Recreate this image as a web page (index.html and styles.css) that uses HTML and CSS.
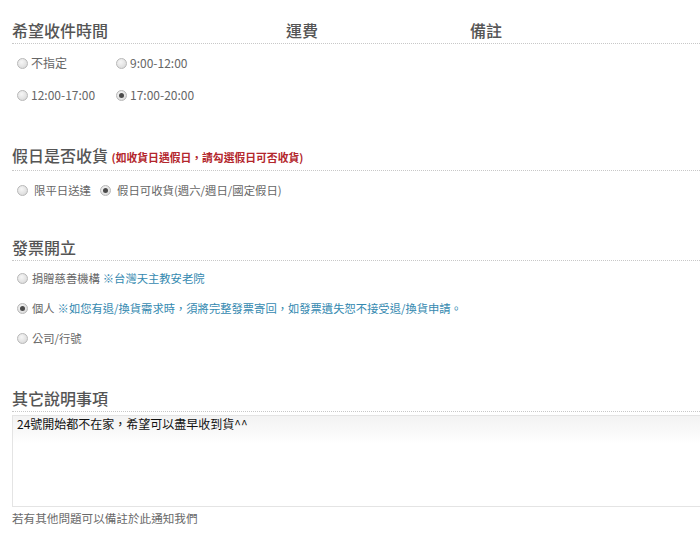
FILE: index.html
```html
<!DOCTYPE html>
<html lang="zh-Hant">
<head>
<meta charset="utf-8">
<title>訂單資訊</title>
<link rel="stylesheet" href="styles.css">
</head>
<body>
<div class="viewport">
  <div class="page">
    <section class="sec sec-time">
      <div class="head head-grid">
        <h2 class="title">希望收件時間</h2>
        <h2 class="title">運費</h2>
        <h2 class="title">備註</h2>
      </div>
      <div class="time-grid">
        <label class="opt"><span class="radio"></span>不指定</label>
        <label class="opt"><span class="radio"></span>9:00-12:00</label>
        <label class="opt"><span class="radio"></span>12:00-17:00</label>
        <label class="opt"><span class="radio on"></span>17:00-20:00</label>
      </div>
    </section>

    <section class="sec sec-holiday">
      <div class="head">
        <h2 class="title">假日是否收貨 <span class="warn">(如收貨日遇假日，請勾選假日可否收貨)</span></h2>
      </div>
      <div class="holiday-row">
        <label class="opt opt-wide first"><span class="radio"></span>限平日送達</label>
        <label class="opt opt-wide"><span class="radio on"></span>假日可收貨(週六/週日/國定假日)</label>
      </div>
    </section>

    <section class="sec sec-invoice">
      <div class="head">
        <h2 class="title">發票開立</h2>
      </div>
      <div class="invoice-list">
        <label class="opt small"><span class="radio"></span>捐贈慈善機構 <span class="note">※台灣天主教安老院</span></label>
        <label class="opt small"><span class="radio on"></span>個人 <span class="note">※如您有退/換貨需求時，須將完整發票寄回，如發票遺失恕不接受退/換貨申請。</span></label>
        <label class="opt small"><span class="radio"></span>公司/行號</label>
      </div>
    </section>

    <section class="sec sec-memo">
      <div class="head">
        <h2 class="title">其它說明事項</h2>
      </div>
      <textarea class="memo">24號開始都不在家，希望可以盡早收到貨^^</textarea>
      <p class="hint">若有其他問題可以備註於此通知我們</p>
    </section>
  </div>
</div>
</body>
</html>
```

FILE: styles.css
```css
html, body {
  margin: 0;
  padding: 0;
  background: #ffffff;
}

body {
  font-family: "Noto Sans CJK TC", "Noto Sans", "Liberation Sans", sans-serif;
  color: #666666;
  text-spacing-trim: space-all;
}

.viewport {
  width: 700px;
  overflow: hidden;
}

.page {
  width: 740px;
  padding-left: 12px;
  box-sizing: border-box;
}

.head {
  border-bottom: 1px dotted #c8c8c8;
  padding-bottom: 2px;
}

.head-grid {
  display: grid;
  grid-template-columns: 274px 184px 1fr;
}

.title {
  margin: 0;
  font-size: 16px;
  line-height: 22px;
  font-weight: 500;
  color: #555555;
  white-space: nowrap;
}

.warn {
  font-size: 10.8px;
  font-weight: 700;
  color: #b3262c;
}

.sec-time { padding-top: 19px; }
.sec-holiday { padding-top: 39px; }
.sec-invoice { padding-top: 36px; }
.sec-memo { padding-top: 39px; }

.opt {
  display: flex;
  align-items: center;
  font-size: 12px;
  line-height: 20px;
  color: #666666;
  white-space: nowrap;
}

.radio {
  flex: none;
  width: 9px;
  height: 9px;
  border: 1px solid #b8b8b8;
  border-radius: 50%;
  background: radial-gradient(circle at 40% 35%, #f6f6f6 0%, #e2e2e2 60%, #cfcfcf 100%);
  margin-right: 3px;
  position: relative;
}

.radio.on::after {
  content: "";
  position: absolute;
  left: 2px;
  top: 2px;
  width: 5px;
  height: 5px;
  border-radius: 50%;
  background: #4a4a4a;
}

.time-grid {
  display: grid;
  grid-template-columns: 99px 99px;
  row-gap: 12px;
  padding-left: 5px;
  margin-top: 9px;
}

.holiday-row {
  display: flex;
  padding-left: 5px;
  margin-top: 9px;
}

.opt-wide {
  font-size: 11.4px;
}

.opt-wide .radio {
  margin-right: 6px;
}

.opt-wide.first {
  width: 83px;
}

.invoice-list {
  display: flex;
  flex-direction: column;
  gap: 10px;
  padding-left: 5px;
  margin-top: 7px;
}

.small {
  font-size: 11.3px;
}

.small .radio {
  margin-right: 4px;
}

.note {
  color: #3489b0;
  margin-left: 3px;
}

.memo {
  display: block;
  box-sizing: border-box;
  width: 728px;
  height: 92px;
  margin: 3px 0 0 0;
  padding: 1px 4px;
  border: 1px solid #e4e4e4;
  background: linear-gradient(#f3f3f3 0px, #fbfbfb 20px, #ffffff 28px);
  font-family: "Noto Sans CJK TC", "Noto Sans", sans-serif;
  font-size: 12px;
  line-height: 14px;
  color: #111111;
  resize: none;
  outline: none;
  text-spacing-trim: space-all;
}

.hint {
  margin: 3px 0 0 0;
  font-size: 11.6px;
  line-height: 16px;
  color: #6a6a6a;
}
```
